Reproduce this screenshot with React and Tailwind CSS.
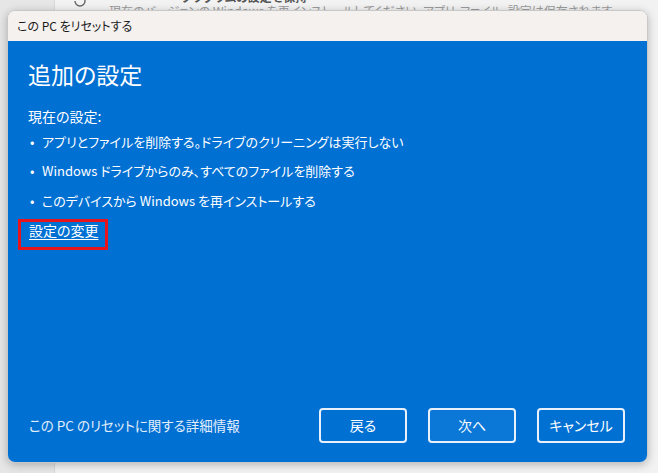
export default function App() {
  return (
    <div className="relative w-[658px] h-[473px] overflow-hidden bg-[#f2f2f2] [font-family:'Noto_Sans_CJK_JP',sans-serif] [font-feature-settings:'palt']">
      {/* background window */}
      <div className="flex h-full">
        <div className="w-[55px] h-full bg-[#e6e6e6] border-r border-[#d9d9d9]" />
        <div className="flex-1 flex flex-col">
          <div className="flex items-start -mt-[10px] pl-[18px] gap-[22px] text-[12px] text-[#9a9a9a]">
            <svg width="14" height="16" viewBox="0 0 14 16" className="mt-[3px]">
              <path d="M2 8a5 5 0 1 0 5-5" fill="none" stroke="#666" strokeWidth="1.4" />
              <path d="M5 1l2.5 2L5 5" fill="none" stroke="#666" strokeWidth="1.4" />
            </svg>
            <div className="leading-[14px]">
              <div className="font-bold text-[#555] pl-[72px]">プラグラムの設定を保持</div>
              <div>現在のバージョンの Windows を再インストールしてください。アプリ、ファイル、設定は保存されます</div>
            </div>
          </div>
        </div>
      </div>

      {/* dialog */}
      <div className="absolute left-[7px] top-[10px] w-[641px] h-[453px] rounded-[8px] overflow-hidden flex flex-col shadow-[0_2px_8px_rgba(0,0,0,0.25)] border border-[#c8c8c8]">
        <div className="h-[30px] shrink-0 bg-[#f5f1ef] flex items-center pl-[9px] text-[12px] text-[#1b1b1b]">
          この PC をリセットする
        </div>
        <div className="flex-1 bg-[#0170d3] flex flex-col px-[20px] text-white">
          <div className="mt-[17px] text-[23px] leading-[32px]">追加の設定</div>
          <div className="mt-[16px] text-[14px] leading-[20px]">現在の設定:</div>
          <div className="flex flex-col text-[13px] leading-[20px]">
            <div className="mt-[6px] flex">
              <span className="w-[14px] pl-[2px]">•</span>
              <span>アプリとファイルを削除する。ドライブのクリーニングは実行しない</span>
            </div>
            <div className="mt-[9px] flex">
              <span className="w-[14px] pl-[2px]">•</span>
              <span>Windows ドライブからのみ、すべてのファイルを削除する</span>
            </div>
            <div className="mt-[10px] flex">
              <span className="w-[14px] pl-[2px]">•</span>
              <span>このデバイスから Windows を再インストールする</span>
            </div>
          </div>
          <div className="mt-[8px] -ml-[10px] self-start border-[3px] border-[#e8141c] pl-[8px] pr-[6px] pt-0 pb-[8px] text-[14px] leading-[17px]">
            <span className="underline underline-offset-[3px]">設定の変更</span>
          </div>
          <div className="mt-auto mb-[19px] flex items-center">
            <div className="flex-1 pl-[1px] text-[13.5px] text-[#e3eefb]">この PC のリセットに関する詳細情報</div>
            <div className="flex gap-[21px] mr-[2px]">
              <button className="w-[88px] h-[35px] rounded-[4px] border-2 border-[#e8f1fb] text-[14px] text-white">戻る</button>
              <button className="w-[88px] h-[35px] rounded-[4px] border-2 border-[#e8f1fb] bg-[#0b78d8] text-[14px] text-white">次へ</button>
              <button className="w-[88px] h-[35px] rounded-[4px] border-2 border-[#e8f1fb] text-[14px] text-white">キャンセル</button>
            </div>
          </div>
        </div>
      </div>
    </div>
  );
}
